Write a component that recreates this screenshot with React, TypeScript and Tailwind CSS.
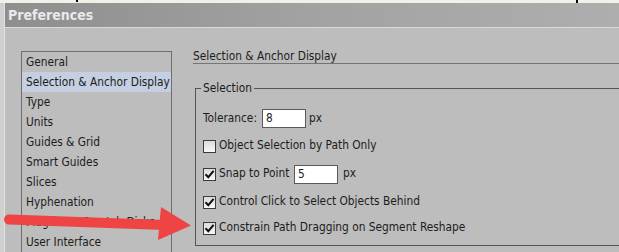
import React from "react";

const font = { fontFamily: '"DejaVu Sans", "Liberation Sans", sans-serif', fontStretch: "condensed" as const };

function Check({ checked }: { checked: boolean }) {
  return (
    <div className="w-[13px] h-[13px] border border-[#3c3c3c] bg-gradient-to-b from-[#dcdcdc] to-[#f8f8f8] flex items-center justify-center shrink-0">
      {checked && (
        <svg width="11" height="11" viewBox="0 0 11 11">
          <path d="M1.5 5.2 L4.3 8.2 L9.6 1.8" fill="none" stroke="#111" strokeWidth="2" />
        </svg>
      )}
    </div>
  );
}

const items = [
  "General",
  "Selection & Anchor Display",
  "Type",
  "Units",
  "Guides & Grid",
  "Smart Guides",
  "Slices",
  "Hyphenation",
  "Plug-ins & Scratch Disks",
  "User Interface",
];

export default function App() {
  return (
    <div className="relative w-[619px] h-[252px] overflow-hidden bg-[#f1f1ea] flex flex-col text-[11.8px] text-[#1c1c1c]" style={font}>
      <div className="h-[3px] shrink-0" />
      <div className="flex flex-1 min-h-0">
        <div className="w-[5px] bg-[#d0d0d0] border-r border-[#e2e2e2] shrink-0" />
        <div className="flex-1 flex flex-col min-w-0">
          <div className="h-[24px] shrink-0 bg-gradient-to-r from-[#8e8e8e] via-[#a2a2a2] to-[#aeaeae] flex items-center pl-[3px] text-[14px] font-bold text-[#e9e9e9]">
            Preferences
          </div>
          <div className="h-px bg-[#dadad4] shrink-0" />
          <div className="flex-1 min-h-0 bg-[#bdbdbd] flex items-start pl-[16px]">
            <div className="mt-[23px] w-[151px] h-[240px] border-t border-x border-[#6e6e6e] shrink-0 flex flex-col">
              {items.map((it, i) => (
                <div
                  key={it}
                  className={`h-[20px] shrink-0 leading-[20px] pl-[4px] whitespace-nowrap ${i === 1 ? "bg-[#c5cfe2]" : ""}`}
                >
                  {it}
                </div>
              ))}
            </div>
            <div className="ml-[21px] flex-1 flex flex-col pt-[21px]">
              <div className="h-[15px] leading-[15px] border-b border-[#747474] shrink-0">Selection &amp; Anchor Display</div>
              <div className="relative shrink-0 mt-[24px] ml-[2px] w-[500px] h-[158px] border border-[#555555] flex flex-col pl-[7px]">
                <div className="absolute -top-[8px] left-[5px] px-[2px] bg-[#bdbdbd] leading-[15px]">Selection</div>
                <div className="mt-[20px] h-[19px] flex items-center">
                  <span className="w-[59px]">Tolerance:</span>
                  <div className="w-[44px] h-[19px] bg-white border border-[#5a5a5a] pl-[3px] leading-[17px]">8</div>
                  <span className="ml-[3px]">px</span>
                </div>
                <div className="mt-[8px] h-[20px] flex items-center">
                  <Check checked={false} />
                  <span className="ml-[3px]">Object Selection by Path Only</span>
                </div>
                <div className="mt-[8px] h-[20px] flex items-center">
                  <Check checked={true} />
                  <span className="ml-[3px] w-[75px]">Snap to Point</span>
                  <div className="w-[44px] h-[19px] bg-white border border-[#5a5a5a] pl-[3px] leading-[17px]">5</div>
                  <span className="ml-[5px]">px</span>
                </div>
                <div className="mt-[8px] h-[20px] flex items-center">
                  <Check checked={true} />
                  <span className="ml-[3px]">Control Click to Select Objects Behind</span>
                </div>
                <div className="mt-[6px] h-[20px] flex items-center">
                  <Check checked={true} />
                  <span className="ml-[3px]">Constrain Path Dragging on Segment Reshape</span>
                </div>
              </div>
            </div>
          </div>
        </div>
      </div>
      <div className="absolute top-0 left-[76px] w-[2px] h-[2px] bg-black" />
      <div className="absolute top-0 left-[576px] w-[2px] h-[3px] bg-black" />
      <svg className="absolute inset-0 pointer-events-none" width="619" height="252" viewBox="0 0 619 252">
        <line x1="9" y1="219.5" x2="165" y2="225" stroke="#ef4444" strokeWidth="10" strokeLinecap="round" />
        <polygon points="161,207 191,225.5 158,240" fill="#ef4444" />
      </svg>
    </div>
  );
}
